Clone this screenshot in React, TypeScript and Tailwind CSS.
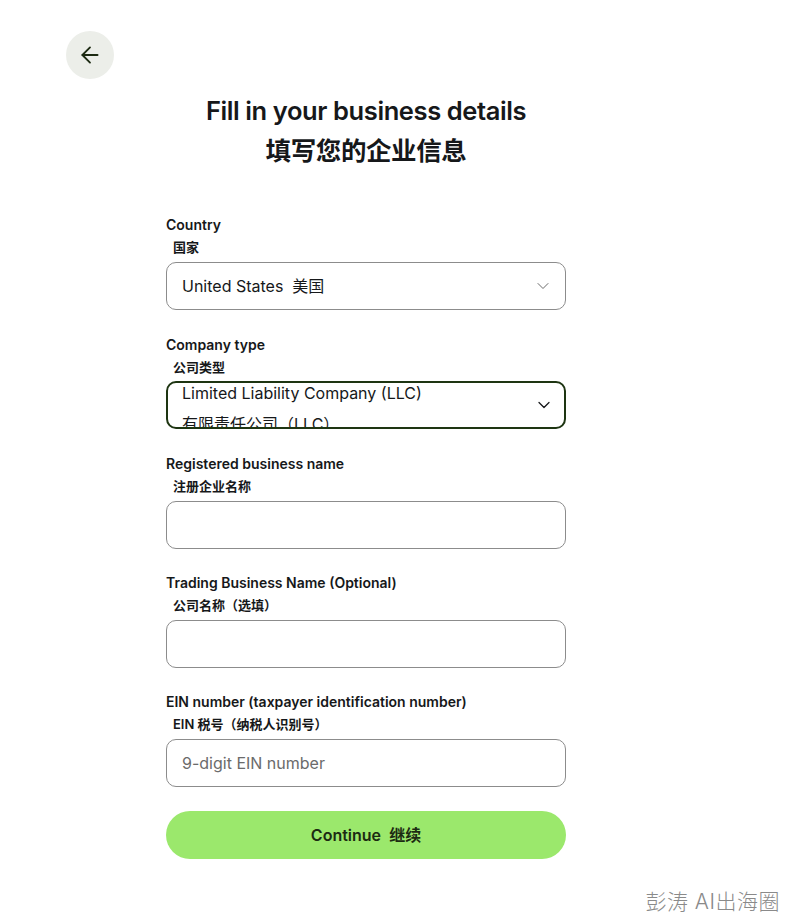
import { ArrowLeft, ChevronDown } from "lucide-react";

const font = { fontFamily: '"Inter", "Noto Sans CJK SC", sans-serif' };

function Label({ en, zh }: { en: string; zh: string }) {
  return (
    <div>
      <div className="text-[14px] font-semibold leading-[20px] text-[#16181a]">{en}</div>
      <div className="mt-[2px] pl-[7px] text-[13px] font-semibold leading-[20px] text-[#16181a]">{zh}</div>
    </div>
  );
}

function TextInput({ placeholder }: { placeholder?: string }) {
  return (
    <div className="mt-[5px] flex h-[48px] items-center rounded-[10px] border border-[#8c8c8c] px-[15px] text-[16px] text-[#6b6b6b]">
      {placeholder}
    </div>
  );
}

export default function App() {
  return (
    <div className="relative min-h-[922px] w-[788px] bg-white" style={font}>
      <div className="pl-[66px] pt-[31px]">
        <button
          type="button"
          className="flex h-[48px] w-[48px] items-center justify-center rounded-full bg-[#eceee9] text-[#1c2a12]"
        >
          <ArrowLeft size={26} strokeWidth={1.7} />
        </button>
      </div>

      <div className="ml-[166px] w-[400px]">
        <h1 className="mt-[12px] text-center text-[25.5px] font-semibold leading-[40px] tracking-[-0.4px] text-[#16181a]">
          Fill in your business details
          <br />
          填写您的企业信息
        </h1>

        <div className="mt-[44px]">
          <Label en="Country" zh="国家" />
          <div className="mt-[5px] flex h-[48px] items-center justify-between rounded-[10px] border border-[#8c8c8c] pl-[15px] pr-[12px] text-[16px] text-[#16181a]">
            <span>United States&nbsp; 美国</span>
            <ChevronDown size={20} strokeWidth={1.2} className="text-[#6b6b6b]" />
          </div>
        </div>

        <div className="mt-[25px]">
          <Label en="Company type" zh="公司类型" />
          <div className="relative mt-[4px] h-[48px] overflow-hidden rounded-[10px] border-2 border-[#1e3512] pl-[14px] pr-[12px] text-[16px] text-[#16181a]">
            <div className="leading-[20px]">Limited Liability Company (LLC)</div>
            <div className="mt-[11px] leading-[20px]">有限责任公司（LLC）</div>
            <ChevronDown
              size={20}
              strokeWidth={1.5}
              className="absolute right-[10px] top-[12px] text-[#16181a]"
            />
          </div>
        </div>

        <div className="mt-[25px]">
          <Label en="Registered business name" zh="注册企业名称" />
          <TextInput />
        </div>

        <div className="mt-[24px]">
          <Label en="Trading Business Name (Optional)" zh="公司名称（选填）" />
          <TextInput />
        </div>

        <div className="mt-[24px]">
          <Label en="EIN number (taxpayer identification number)" zh="EIN 税号（纳税人识别号）" />
          <TextInput placeholder="9-digit EIN number" />
        </div>

        <button
          type="button"
          className="mt-[24px] flex h-[48px] w-full items-center justify-center rounded-full bg-[#9be86c] text-[16px] font-semibold text-[#1c2a12]"
        >
          Continue&nbsp; 继续
        </button>
      </div>

      <div className="absolute bottom-[5px] right-[8px] text-[21px] font-light tracking-[0.5px] text-[#8a8a8a]">
        彭涛 AI出海圈
      </div>
    </div>
  );
}
